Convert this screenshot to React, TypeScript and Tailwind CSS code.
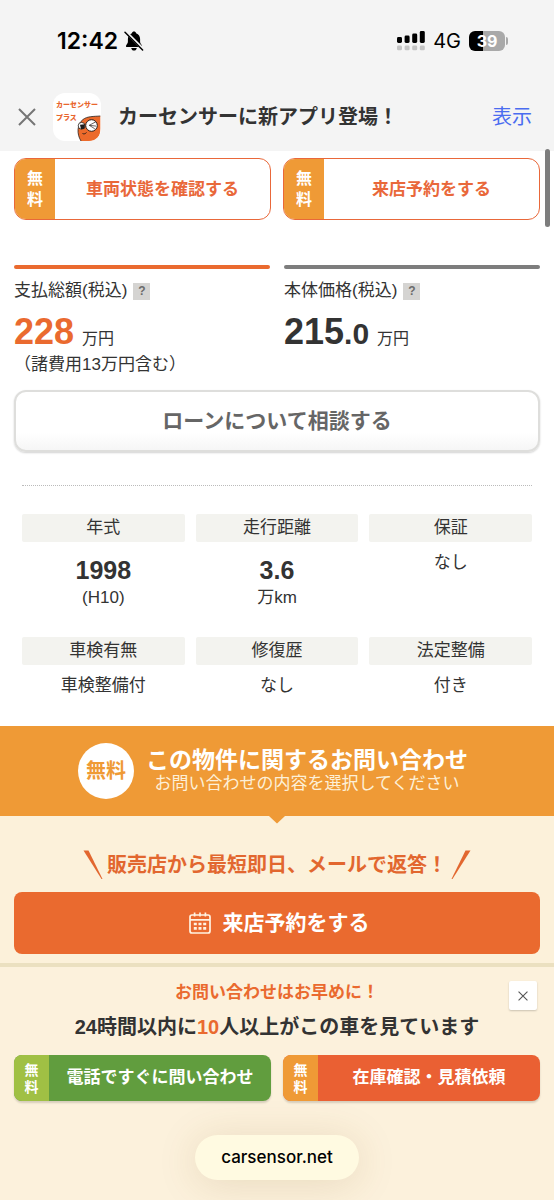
// src/App.tsx
import React from 'react';

interface Spec {
  label: string;
  value: string;
  unit?: string;
}

const specs: Spec[] = [
  { label: '年式', value: '1998', unit: '(H10)' },
  { label: '走行距離', value: '3.6', unit: '万km' },
  { label: '保証', value: 'なし' },
  { label: '車検有無', value: '車検整備付' },
  { label: '修復歴', value: 'なし' },
  { label: '法定整備', value: '付き' },
];

const BellOffIcon = () => (
  <svg width="20" height="20" viewBox="0 0 20 20" aria-hidden="true">
    <path d="M10 0.600c-1.100 0-1.900.7-2.100 1.600C5.200 3.100 3.900 5.300 3.900 8v2.600c0 1.500-.6 2.300-1.500 3.300-.8.9-.5 2.100.8 2.100h13.600c1.300 0 1.600-1.200.8-2.100-.9-1-1.500-1.800-1.500-3.300V8c0-2.700-1.300-4.900-4-5.800-.2-.9-1-1.600-2.100-1.600z" fill="#000" />
    <path d="M7.200 17h5.600c-.3 1.600-1.400 2.600-2.800 2.600S7.500 18.600 7.200 17z" fill="#000" />
    <path d="M2.200 1.200 19.200 18.400" stroke="#f4f4f4" strokeWidth="3" />
    <path d="M1 1.200 18.600 19" stroke="#000" strokeWidth="1.500" strokeLinecap="round" />
  </svg>
);

const SignalIcon = () => (
  <svg width="28" height="20" viewBox="0 0 28 20" aria-hidden="true">
    <g fill="#000">
      <rect x="0" y="6" width="5" height="6" rx="1.400" />
      <rect x="7.600" y="4.500" width="5" height="7.500" rx="1.400" />
      <rect x="15.200" y="2.500" width="5" height="9.500" rx="1.400" />
      <rect x="22.800" y="0" width="5" height="12" rx="1.400" />
    </g>
    <g fill="#c4c4c4">
      <rect x="0" y="14.500" width="5" height="4.800" rx="1.400" />
      <rect x="7.600" y="14.500" width="5" height="4.800" rx="1.400" />
      <rect x="15.200" y="14.500" width="5" height="4.800" rx="1.400" />
      <rect x="22.800" y="14.500" width="5" height="4.800" rx="1.400" />
    </g>
  </svg>
);

const CalendarIcon = () => (
  <svg width="22" height="22" viewBox="0 0 22 22" fill="none" stroke="#fff3e2" strokeWidth="1.700" aria-hidden="true">
    <rect x="1" y="3" width="20" height="18" rx="2" />
    <path d="M1 7.800h20M5.600 0.500v4M11 0.500v4M16.400 0.500v4" />
    <path d="M4.800 12h3M9.500 12h3M14.200 12h3M4.800 16.400h3M9.500 16.400h3M14.200 16.400h3" strokeWidth="2.600" />
  </svg>
);

const CrossIcon = ({ size, color, width }: { size: number; color: string; width: number }) => (
  <svg width={size} height={size} viewBox="0 0 18 18" fill="none" stroke={color} strokeWidth={width} aria-hidden="true">
    <path d="M1 1l16 16M17 1L1 17" />
  </svg>
);

const AppIcon = () => (
  <div className="relative h-12 w-12 shrink-0 overflow-hidden rounded-xl bg-white pt-[5px] pl-[3px] text-[7px] leading-[13px] font-black whitespace-nowrap text-[#e9662d]">
    <p>カーセンサー</p>
    <p>プラス</p>
    <svg className="absolute right-0 bottom-0" width="24" height="26" viewBox="0 0 24 26" aria-hidden="true">
      <path d="M4 26C-0.500 19 0 9 6 4.500 10 1.200 17 1.500 23.300 1v13c0 7-3 11-9 12z" fill="#ec6a2b" />
      <path d="M4 26C-0.500 19 0 9 6 4.500 10 1.200 17 1.500 23.300 1" fill="none" stroke="#2a211d" strokeWidth="0.800" />
      <circle cx="4.600" cy="10.800" r="3.400" fill="#fff" stroke="#2a211d" strokeWidth="0.800" />
      <circle cx="14.500" cy="10.500" r="5.800" fill="#fff" stroke="#2a211d" strokeWidth="1" />
      <path d="M3 9.800 8 9.300 7.300 13.800 4 14.300z" fill="#1d1b1a" />
      <path d="M18.800 6.800l-6.500 3.500 6.700.8M12.300 10.300l5.500 3.500" stroke="#2a211d" strokeWidth="0.700" fill="none" />
      <path d="M5.500 18.500c1.500.8 3 .2 4-1" stroke="#2a211d" strokeWidth="1" fill="none" />
    </svg>
  </div>
);

const StatusBar = () => (
  <div className="flex h-[82px] items-center justify-between pr-[46px] pl-[57px] font-['Inter',sans-serif] text-black">
    <div className="flex items-center gap-[6px]">
      <span className="text-[23px] leading-7 font-semibold">12:42</span>
      <BellOffIcon />
    </div>
    <div className="flex items-center gap-2">
      <SignalIcon />
      <span className="text-xl leading-6">4G</span>
      <div className="flex items-center gap-px">
        <div className="flex h-5 w-9 items-center justify-center rounded-md bg-[linear-gradient(to_right,#000_40%,#a9a9a9_40%)] text-base font-bold text-white">
          39
        </div>
        <span className="h-2 w-[2px] rounded-r-full bg-[#a9a9a9]" />
      </div>
    </div>
  </div>
);

const OutlineButton = ({ label }: { label: string }) => (
  <button className="flex h-[62px] flex-1 overflow-hidden rounded-xl border border-[#e9683a] bg-white text-[#e9683a]">
    <span className="flex w-10 shrink-0 flex-col items-center justify-center self-stretch bg-[#ef9a36] text-base leading-[21px] font-bold text-white">
      <span>無</span>
      <span>料</span>
    </span>
    <span className="flex-1 self-center pt-[2px] text-[17px] leading-6 font-bold">{label}</span>
  </button>
);

const PriceLabel = ({ text }: { text: string }) => (
  <div className="flex items-center gap-[6px] pt-[9px] text-[17px] leading-[26px]">
    <span>{text}</span>
    <button className="flex h-[17px] w-[17px] items-center justify-center bg-[#d5d4d2] text-xs font-bold text-[#6b6b6b]" aria-label="説明">
      ?
    </button>
  </div>
);

const ContactButton = ({ label, color, tagColor }: { label: string; color: string; tagColor: string }) => (
  <button className={`flex h-[46px] flex-1 overflow-hidden rounded-lg text-white shadow-[0_2px_2px_rgba(0,0,0,0.15)] ${color}`}>
    <span className={`flex w-[35px] shrink-0 flex-col items-center justify-center self-stretch pt-[2px] text-sm leading-[17px] font-bold ${tagColor}`}>
      <span>無</span>
      <span>料</span>
    </span>
    <span className="flex-1 self-center text-[17px] leading-6 font-bold whitespace-nowrap">{label}</span>
  </button>
);

export default function App() {
  return (
    <div className="min-h-screen bg-[#fcf1da] font-['Liberation_Sans','Noto_Sans_CJK_JP',sans-serif] text-[#333]">
      {/* Status bar + app banner */}
      <header className="bg-[#f4f4f4]">
        <StatusBar />
        <div className="flex h-[69px] items-center pr-[22px] pl-[18px]">
          <button aria-label="閉じる">
            <CrossIcon size={18} color="#757575" width={2} />
          </button>
          <div className="ml-[17px]">
            <AppIcon />
          </div>
          <p className="ml-[17px] flex-1 text-xl leading-7 font-bold">カーセンサーに新アプリ登場！</p>
          <a href="#" className="text-xl leading-7 text-[#4a6cf0]">表示</a>
        </div>
      </header>

      <main>
        <section className="relative bg-white px-[14px] pt-[7px] pb-[26px]">
          <div className="absolute -top-[2px] right-1 h-[78px] w-[5px] rounded-full bg-[#7d7d7d]" />
          <div className="flex gap-3">
            <OutlineButton label="車両状態を確認する" />
            <OutlineButton label="来店予約をする" />
          </div>

          {/* Price */}
          <div className="mt-[45px] grid grid-cols-2 gap-[14px]">
            <div>
              <div className="h-1 rounded-full bg-[#ea6a2f]" />
              <PriceLabel text="支払総額(税込)" />
              <p className="mt-3 flex items-baseline gap-2 text-base leading-8">
                <span className="text-4xl leading-8 font-bold text-[#ea6a2f]">228</span>
                <span>万円</span>
              </p>
              <p className="text-[17px] leading-5">（諸費用13万円含む）</p>
            </div>
            <div>
              <div className="h-1 rounded-full bg-[#7d7d7d]" />
              <PriceLabel text="本体価格(税込)" />
              <p className="mt-3 flex items-baseline gap-2 text-base leading-8">
                <span className="text-4xl leading-8 font-bold">
                  215<span className="text-3xl leading-8">.0</span>
                </span>
                <span>万円</span>
              </p>
            </div>
          </div>

          <button className="mt-[15px] h-[62px] w-full rounded-xl border-2 border-[#dededc] bg-linear-to-b from-white from-70% to-[#f6f6f6] text-[21px] font-bold text-[#666] shadow-[0_1px_2px_rgba(0,0,0,0.18)]">
            ローンについて相談する
          </button>

          {/* Specs */}
          <div className="mt-[33px] px-2">
            <div className="border-t border-dotted border-[#bbb]" />
            <dl className="mt-7 grid grid-cols-3 gap-x-[11px] gap-y-[27px] text-center text-[17px] leading-7">
              {specs.map((spec) => (
                <div key={spec.label}>
                  <dt className="rounded-xs bg-[#f3f3ef]">{spec.label}</dt>
                  {spec.unit ? (
                    <dd className="pt-3">
                      <p className="text-[25px] leading-8 font-bold">{spec.value}</p>
                      <p className="leading-6">{spec.unit}</p>
                    </dd>
                  ) : (
                    <dd className="pt-[7px]">{spec.value}</dd>
                  )}
                </div>
              ))}
            </dl>
          </div>
        </section>

        {/* Inquiry heading */}
        <section className="relative flex h-[90px] items-center justify-center gap-3 bg-[#ef9a36] pr-2 text-white">
          <span className="flex h-14 w-14 items-center justify-center rounded-full bg-white text-xl font-bold text-[#ef9a36]">
            無料
          </span>
          <div className="pb-[2px] text-center">
            <h2 className="text-[23px] leading-7 font-bold">この物件に関するお問い合わせ</h2>
            <p className="text-[17px] leading-5 text-[#fdf0d8]">お問い合わせの内容を選択してください</p>
          </div>
          <svg className="absolute top-full left-1/2 -translate-x-1/2" width="16" height="8" viewBox="0 0 16 8" aria-hidden="true">
            <path d="M0 0h16L8 7.500z" fill="#ef9a36" />
          </svg>
        </section>

        <section className="px-[14px] pt-[34px] pb-[9px]">
          <div className="flex items-center justify-center gap-1 text-[#e2672f]">
            <svg width="20" height="30" viewBox="0 0 20 30" aria-hidden="true">
              <path d="M0.500 0.500h5L19.500 29h-1z" fill="currentColor" />
            </svg>
            <p className="text-xl leading-7 font-bold">販売店から最短即日、メールで返答！</p>
            <svg width="20" height="30" viewBox="0 0 20 30" aria-hidden="true">
              <path d="M19.500 0.500h-5L0.500 29h1z" fill="currentColor" />
            </svg>
          </div>
          <button className="mt-3 flex h-[62px] w-full items-center justify-center gap-3 rounded-lg bg-[#ea6a2f] pl-1 text-[21px] font-bold text-white">
            <CalendarIcon />
            来店予約をする
          </button>
        </section>
      </main>

      {/* Bottom sheet */}
      <footer className="relative border-t-4 border-[#ebe0c0] bg-[#fcf1dc] px-[14px] pt-3 pb-5 text-center font-bold">
        <button className="absolute top-[14px] right-[17px] flex h-[29px] w-7 items-center justify-center rounded-xs bg-white shadow-[0_1px_2px_rgba(0,0,0,0.2)]" aria-label="閉じる">
          <CrossIcon size={10} color="#555" width={2} />
        </button>
        <p className="text-[17px] leading-7 text-[#ea6a2f]">お問い合わせはお早めに！</p>
        <p className="mt-1 text-xl leading-8">
          24時間以内に<span className="text-[#ea6a2f]">10</span>人以上がこの車を見ています
        </p>
        <div className="mt-3 flex gap-3">
          <ContactButton label="電話ですぐに問い合わせ" color="bg-[#619d3e]" tagColor="bg-[#a0c044]" />
          <ContactButton label="在庫確認・見積依頼" color="bg-[#ea6033]" tagColor="bg-[#ef9a36]" />
        </div>
        <a
          href="#"
          className="mt-[34px] inline-block rounded-full bg-[#fffae1] px-[26px] py-2 font-['Inter',sans-serif] text-[17px] leading-[29px] font-medium text-black shadow-[0_4px_40px_rgba(120,90,20,0.15)]"
        >
          carsensor.net
        </a>
      </footer>
    </div>
  );
}
